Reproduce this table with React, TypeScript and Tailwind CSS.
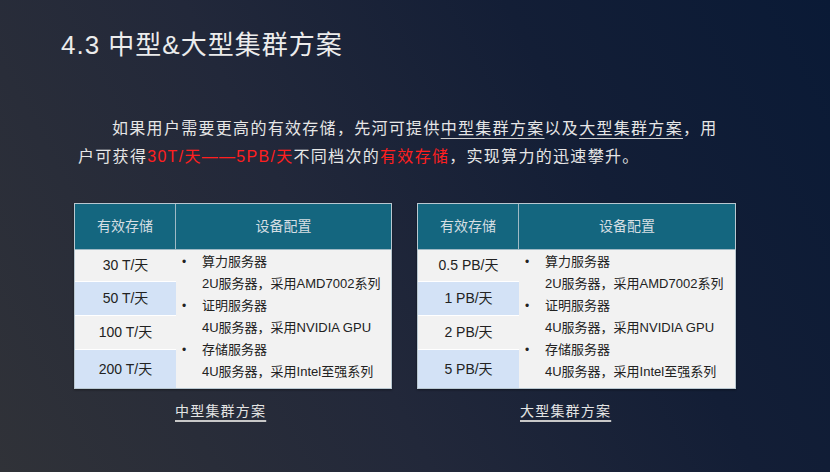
import React from "react";

const font = { fontFamily: '"Liberation Sans", "Noto Sans CJK SC", sans-serif' };

function Table({ values }: { values: string[] }) {
  const lines: { bullet: boolean; text: string }[] = [
    { bullet: true, text: "算力服务器" },
    { bullet: false, text: "2U服务器，采用AMD7002系列" },
    { bullet: true, text: "证明服务器" },
    { bullet: false, text: "4U服务器，采用NVIDIA GPU" },
    { bullet: true, text: "存储服务器" },
    { bullet: false, text: "4U服务器，采用Intel至强系列" },
  ];
  const rowStyles = [
    "h-[31px] bg-[#f2f2f2]",
    "h-[33px] bg-[#d3e2f6] mt-px",
    "h-[33px] bg-[#f2f2f2] mt-px",
    "h-[38px] bg-[#d3e2f6] mt-px",
  ];
  return (
    <div className="w-full border border-[#b9c8d1] bg-[#f2f2f2] shadow-[0_1px_2px_rgba(0,0,0,0.4)]">
      <div className="flex h-[45px] bg-[#14667f] text-[14px] text-[#d5dee3]">
        <div className="flex w-[101px] items-center justify-center border-r border-[#9fb9c5]">
          有效存储
        </div>
        <div className="flex flex-1 items-center justify-center">设备配置</div>
      </div>
      <div className="flex border-t border-[#9fb9c5] bg-[#f2f2f2]">
        <div className="flex w-[101px] flex-col bg-white text-[14px] text-[#222]">
          {values.map((v, i) => (
            <div key={v} className={`flex items-center justify-center ${rowStyles[i]}`}>
              {v}
            </div>
          ))}
        </div>
        <div className="flex flex-1 flex-col pt-px text-[13px] text-[#222]">
          {lines.map((l, i) => (
            <div key={i} className="flex h-[22px] items-center">
              <span className="w-[26px] pl-[6px] text-[12px]">{l.bullet ? "•" : ""}</span>
              <span>{l.text}</span>
            </div>
          ))}
        </div>
      </div>
    </div>
  );
}

export default function App() {
  return (
    <div
      style={font}
      className="relative h-[472px] w-[830px] overflow-hidden bg-[linear-gradient(62deg,#303238_0%,#22283a_40%,#131e36_70%,#0a1a36_100%)] text-white"
    >
      <div className="pl-[61px] pt-[29px]">
        <h1 className="text-[26px] leading-[32px] tracking-[1px] text-[#ececec]">
          4.3 中型&amp;大型集群方案
        </h1>
      </div>

      <div className="mt-[54px] pl-[78px] text-[16px] leading-[28px] tracking-[1.3px] text-[#e6e6e6]">
        <div className="pl-[34px] whitespace-nowrap">
          如果用户需要更高的有效存储，先河可提供
          <span className="underline decoration-[#cfcfcf] underline-offset-[4px]">中型集群方案</span>
          以及
          <span className="underline decoration-[#cfcfcf] underline-offset-[4px]">大型集群方案</span>
          ，用
        </div>
        <div className="whitespace-nowrap">
          户可获得<span className="text-[#ff1f1f]">30T/天——5PB/天</span>不同档次的
          <span className="text-[#ff1f1f]">有效存储</span>，实现算力的迅速攀升。
        </div>
      </div>

      <div className="mt-[32px] flex gap-[25px] pl-[74px]">
        <div className="flex w-[318px] flex-col">
          <Table values={["30 T/天", "50 T/天", "100 T/天", "200 T/天"]} />
          <div className="mt-[12px] pl-[101px] text-[14px] leading-[20px] tracking-[1.2px] text-[#e4e4e4]">
            <span className="underline decoration-[#c8c8c8] decoration-2 underline-offset-[4px]">中型集群方案</span>
          </div>
        </div>
        <div className="flex w-[319px] flex-col">
          <Table values={["0.5 PB/天", "1 PB/天", "2 PB/天", "5 PB/天"]} />
          <div className="mt-[12px] pl-[103px] text-[14px] leading-[20px] tracking-[1.2px] text-[#e4e4e4]">
            <span className="underline decoration-[#c8c8c8] decoration-2 underline-offset-[4px]">大型集群方案</span>
          </div>
        </div>
      </div>
    </div>
  );
}
